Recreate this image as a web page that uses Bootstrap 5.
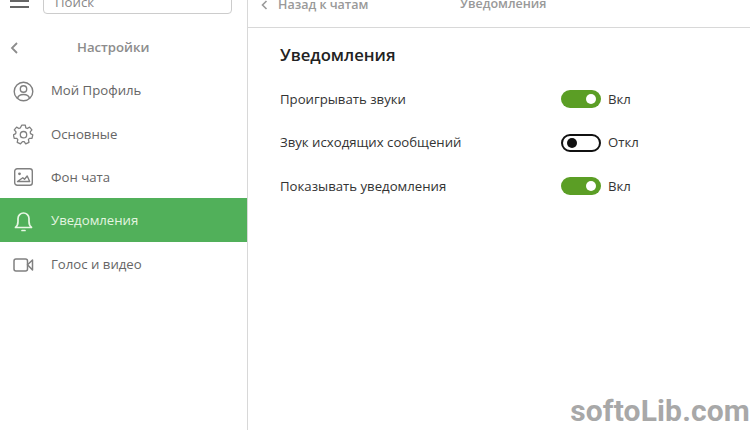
<!DOCTYPE html>
<html lang="ru">
<head>
  <meta charset="UTF-8">
  <title>Настройки</title>
  <link href="https://cdn.jsdelivr.net/npm/bootstrap@5.3.0/dist/css/bootstrap.min.css" rel="stylesheet">
  <style>
    html, body { height: 430px; overflow: hidden; }
    body { font-family: "Open Sans", "Noto Sans", sans-serif; font-size: 13.2px; color: #333; background: #fff; }
    .side-pane { width: 248px; height: 430px; border-right: 1px solid #d8d8d8; }
    .side-top { height: 27px; padding-left: 10px; gap: 14px; }
    .burger { width: 19px; height: 8px; margin-top: 0; border-bottom: 2px solid #666; position: relative; }
    .burger::before { content: ""; position: absolute; left: 0; right: 0; top: 0; height: 2px; background: #666; }
    .search-box { width: 189px; height: 30px; margin-top: -16px; border: 1px solid #ccc; border-radius: 4px; padding: 0 11px; line-height: 34px; color: #888; flex: none; }
    .side-title { height: 41px; padding-left: 10px; color: #8c8c8c; font-weight: 600; }
    .side-title span { margin-left: 58px; }
    .side-link { height: 43.4px; padding: 3px 0 0 13px; gap: 17px; color: #666; border: 0; }
    .side-link.is-on { background: #51b05a; color: #e4f5e0; }
    .side-link svg { flex: none; }
    .main-pane { min-width: 0; }
    .main-top { height: 28px; border-bottom: 1px solid #d8d8d8; padding-left: 13px; color: #999; font-weight: 600; font-size: 12.5px; line-height: 8px; }
    .main-top .crumb { width: 199px; gap: 10px; }
    .main-body { padding: 16px 0 0 32px; }
    .main-head { font-size: 16.7px; font-weight: 600; color: #222; margin: 0 0 12px; line-height: 22px; }
    .opt-row { height: 43.4px; color: #333; }
    .opt-row .opt-name { width: 281px; }
    .tgl { width: 40px; height: 18px; border-radius: 9px; flex: none; background: #5b9e25; margin-right: 7px; position: relative; margin-top: -1px; }
    .tgl::after { content: ""; position: absolute; top: 4px; right: 5px; width: 10px; height: 10px; border-radius: 50%; background: #fff; }
    .tgl.is-off { background: #fff; border: 2px solid #111; }
    .tgl.is-off::after { background: #111; top: 2px; left: 4px; right: auto; }
    .watermark { position: absolute; right: 0; bottom: 1px; font-family: Roboto, sans-serif; font-weight: 700; font-size: 30px; line-height: 36px; color: #a8a8a8; letter-spacing: .15px; }
  </style>
</head>
<body>
  <div class="d-flex">
    <div class="side-pane flex-shrink-0">
      <div class="side-top d-flex align-items-start">
        <div class="burger flex-shrink-0"></div>
        <div class="search-box bg-white">Поиск</div>
      </div>
      <div class="side-title d-flex align-items-center">
        <svg width="9" height="12" viewBox="0 0 9 12" fill="none" stroke="#8c8c8c" stroke-width="1.8"><path d="M7 1 2 6l5 5"/></svg>
        <span>Настройки</span>
      </div>
      <div class="list-group list-group-flush">
        <a class="side-link list-group-item d-flex align-items-center" href="#">
          <svg width="21" height="21" viewBox="0 0 21 21" fill="none" stroke="#808080" stroke-width="1.4"><circle cx="10.5" cy="10.5" r="9.3"/><circle cx="10.5" cy="8" r="3.2"/><path d="M4.5 17.5c.6-3 2.8-4 6-4s5.400 1 6 4"/></svg>
          Мой Профиль
        </a>
        <a class="side-link list-group-item d-flex align-items-center" href="#">
          <svg width="21" height="21" viewBox="0 0 21 21" fill="none" stroke="#808080" stroke-width="1.3" stroke-linejoin="round"><path d="M8.700 1.200h3.600l.5 2.600 1.500.7 2.300-1.400 2.300 2.800-1.700 2 .3 1.700 2.300 1.200-.8 3.500-2.600.1-1 1.300.6 2.600-3.300 1.500-1.500-2.200h-1.700L7.500 19.800 4.200 18.300l.6-2.600-1-1.300-2.600-.1-.8-3.500 2.300-1.200.3-1.700-1.700-2 2.300-2.800 2.300 1.400 1.500-.7z"/><circle cx="10.500" cy="10.700" r="3.200"/></svg>
          Основные
        </a>
        <a class="side-link list-group-item d-flex align-items-center" href="#">
          <svg width="21" height="21" viewBox="0 0 21 21" fill="none" stroke="#808080" stroke-width="1.4" stroke-linejoin="round"><rect x="1.700" y="1.700" width="17.600" height="16.600" rx="2.500"/><circle cx="6.500" cy="6.800" r="1.400" fill="#808080" stroke="none"/><path d="M4.500 14.500h12.200l-2.500-5.500-2.700 3.300-1.700-1.500z"/></svg>
          Фон чата
        </a>
        <a class="side-link is-on list-group-item d-flex align-items-center" href="#">
          <svg width="21" height="23" viewBox="0 0 21 23" fill="none" stroke="#e8f7e4" stroke-width="1.700" stroke-linejoin="round"><path d="M2.500 17.500c1.800-1.500 2.500-3 2.500-6V8.500a5.500 5.500 0 0 1 11 0v3c0 3 .7 4.500 2.500 6z"/><path d="M9 20.500h3" stroke-linecap="round"/></svg>
          Уведомления
        </a>
        <a class="side-link list-group-item d-flex align-items-center" href="#">
          <svg width="21" height="16" viewBox="0 0 21 16" fill="none" stroke="#808080" stroke-width="1.500" stroke-linejoin="round"><rect x="1" y="2" width="13.500" height="12" rx="2"/><path d="M14.500 7.800 19.500 3v10z"/></svg>
          Голос и видео
        </a>
      </div>
    </div>
    <div class="main-pane flex-grow-1">
      <div class="main-top d-flex align-items-start">
        <div class="crumb d-flex align-items-center">
          <svg width="7" height="10" viewBox="0 0 7 10" fill="none" stroke="#999" stroke-width="1.600"><path d="M5.500 1 1.500 5l4 4"/></svg>
          Назад к чатам
        </div>
        <div>Уведомления</div>
      </div>
      <div class="main-body">
        <h5 class="main-head">Уведомления</h5>
        <div class="opt-row d-flex align-items-center">
          <div class="opt-name">Проигрывать звуки</div>
          <div class="tgl"></div><div>Вкл</div>
        </div>
        <div class="opt-row d-flex align-items-center">
          <div class="opt-name">Звук исходящих сообщений</div>
          <div class="tgl is-off"></div><div>Откл</div>
        </div>
        <div class="opt-row d-flex align-items-center">
          <div class="opt-name">Показывать уведомления</div>
          <div class="tgl"></div><div>Вкл</div>
        </div>
      </div>
    </div>
  </div>
  <div class="watermark">softoLib.com</div>
  <script src="https://cdn.jsdelivr.net/npm/bootstrap@5.3.0/dist/js/bootstrap.bundle.min.js"></script>
</body>
</html>
